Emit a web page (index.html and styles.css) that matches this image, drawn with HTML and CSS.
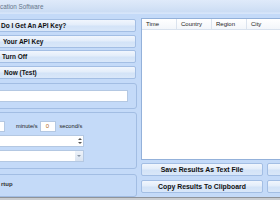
FILE: index.html
```html
<!DOCTYPE html>
<html>
<head>
<meta charset="utf-8">
<link rel="stylesheet" href="styles.css">
</head>
<body>
<div class="window">
  <div class="titlebar">cation Software</div>
  <div class="main">
    <div class="left">
      <div class="btn i0">Do I Get An API Key?</div>
      <div class="btn i2">Your API Key</div>
      <div class="btn i1">Turn Off</div>
      <div class="btn i3">Now (Test)</div>
      <div class="group g1">
        <div class="textbox"></div>
      </div>
      <div class="group g2">
        <div class="row">
          <div class="num stub"></div>
          <span class="lbl">minute/s</span>
          <div class="num">0</div>
          <span class="lbl">second/s</span>
        </div>
        <div class="spin">
          <div class="arrows"><span class="up"></span><span class="down"></span></div>
        </div>
        <div class="combo">
          <div class="drop"><span class="down"></span></div>
        </div>
      </div>
      <div class="group g3">rtup</div>
    </div>
    <div class="right">
      <div class="list">
        <div class="header">
          <div class="col">Time</div>
          <div class="col">Country</div>
          <div class="col">Region</div>
          <div class="col">City</div>
        </div>
      </div>
      <div class="actions">
        <div class="btn c">Save Results As Text File</div>
        <div class="btn c"></div>
        <div class="btn c">Copy Results To Clipboard</div>
        <div class="btn c"></div>
      </div>
    </div>
  </div>
  <div class="strip"></div>
</div>
</body>
</html>
```
FILE: styles.css
```css
html, body {
  margin: 0;
  padding: 0;
}
body {
  width: 280px;
  height: 200px;
  overflow: hidden;
  background: #c4daf8;
  font-family: "Liberation Sans", Arial, sans-serif;
  color: #1a1a1a;
}
.window {
  display: flex;
  flex-direction: column;
  height: 200px;
}
.titlebar {
  height: 14px;
  line-height: 13px;
  font-size: 6.3px;
  color: #66768a;
  background: linear-gradient(#dfeafa 0%, #d3e2f6 60%, #cbdcf4 92%, #dbe8fa 100%);
  box-sizing: border-box;
  border-bottom: 1px solid #d6e5fa;
  white-space: nowrap;
}
.main {
  flex: 1;
  display: flex;
  min-height: 0;
}
.left {
  margin-left: -6px;
  width: 143px;
  flex: none;
  display: flex;
  flex-direction: column;
  padding-top: 5px;
  gap: 2.67px;
}
.btn {
  box-sizing: border-box;
  height: 13px;
  line-height: 11px;
  border: 1px solid #a3bee4;
  border-radius: 2px;
  background: linear-gradient(#f1f6fd 0%, #e3edfa 45%, #d3e3f7 55%, #d9e7f9 100%);
  font-weight: bold;
  font-size: 6.9px;
  color: #111;
  white-space: nowrap;
  overflow: hidden;
}
.left .btn {
  width: 142px;
  font-size: 6.5px;
}
.i0 { padding-left: 6px; }
.i1 { padding-left: 7px; }
.i2 { padding-left: 8px; }
.i3 { padding-left: 9px; }
.group {
  box-sizing: border-box;
  border: 1px solid #a2bde3;
  border-radius: 3px;
  width: 143px;
}
.g1 {
  margin-top: 1.3px;
  height: 26px;
  padding: 6px 8px 0 0;
}
.textbox {
  height: 12px;
  background: #fff;
  border: 1px solid #b4c8e2;
  border-left: none;
  box-sizing: border-box;
}
.g2 {
  height: 57px;
  padding-top: 8px;
  display: flex;
  flex-direction: column;
  gap: 3px;
}
.row {
  display: flex;
  align-items: center;
  height: 11px;
}
.num {
  box-sizing: border-box;
  height: 11px;
  width: 16px;
  background: #fff;
  border: 1px solid #b4c8e2;
  font-size: 6px;
  line-height: 9px;
  text-align: center;
  color: #b26a1c;
}
.stub {
  width: 10px;
  border-left: none;
}
.lbl {
  font-size: 5.7px;
  color: #222;
  margin: 0 2px 0 11px;
  white-space: nowrap;
}
.lbl + .num + .lbl { margin-left: 4px; }
.spin, .combo {
  box-sizing: border-box;
  width: 89px;
  height: 12px;
  background: #fff;
  border: 1px solid #b4c8e2;
  border-left: none;
  display: flex;
  justify-content: flex-end;
}
.arrows {
  width: 7px;
  display: flex;
  flex-direction: column;
  justify-content: center;
  align-items: center;
  gap: 2px;
}
.up, .down {
  width: 0;
  height: 0;
  border-left: 2px solid transparent;
  border-right: 2px solid transparent;
}
.up { border-bottom: 2px solid #555; }
.down { border-top: 2px solid #555; }
.drop {
  width: 8px;
  background: linear-gradient(#eef3fa, #d9e3f0);
  display: flex;
  align-items: center;
  justify-content: center;
}
.drop .down { border-top-color: #8a96a6; }
.g3 {
  margin-top: 2.3px;
  height: 23px;
  padding-left: 6px;
  font-size: 6px;
  font-weight: bold;
  color: #333;
  line-height: 19px;
  white-space: nowrap;
}
.right {
  margin-left: 4px;
  width: 150px;
  flex: none;
  padding-top: 4px;
  display: flex;
  flex-direction: column;
}
.list {
  box-sizing: border-box;
  height: 142px;
  background: #fff;
  border: 1px solid #93b1da;
}
.header {
  display: flex;
  height: 11px;
  background: linear-gradient(#ffffff, #f3f6fa);
  border-bottom: 1px solid #d9e2ee;
  box-sizing: border-box;
}
.col {
  width: 35px;
  flex: none;
  box-sizing: border-box;
  padding-left: 4px;
  border-right: 1px solid #dbe3ee;
  font-size: 6px;
  line-height: 10px;
  color: #222;
}
.actions {
  margin-top: 3px;
  display: grid;
  grid-template-columns: 122px 122px;
  column-gap: 4px;
  row-gap: 4px;
}
.btn.c {
  text-align: center;
}
.strip {
  height: 3px;
  background: linear-gradient(#8f9399 0, #8f9399 1px, #c9ccd0 1px);
}
```
